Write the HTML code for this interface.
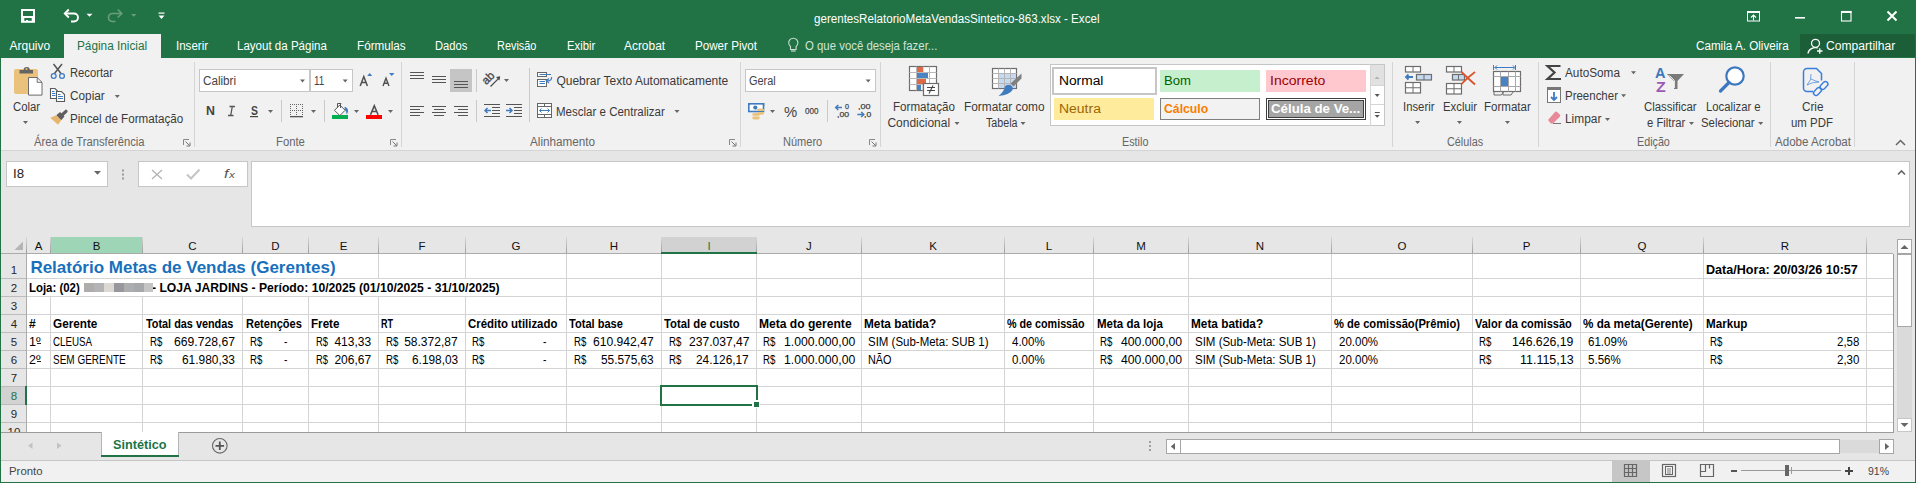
<!DOCTYPE html>
<html><head><meta charset="utf-8"><style>
html,body{margin:0;padding:0;}
body{width:1916px;height:483px;overflow:hidden;position:relative;font-family:"Liberation Sans",sans-serif;}
body>div,body>svg{position:absolute;}
</style></head><body>
<div style="left:0px;top:0px;width:1916px;height:483px;background:#217346;"></div>
<div style="left:1px;top:58px;width:1914px;height:92px;background:#f1f1f1;"></div>
<div style="left:1px;top:150px;width:1914px;height:1px;background:#d4d4d4;"></div>
<div style="left:1px;top:151px;width:1914px;height:76px;background:#e6e6e6;"></div>
<div style="left:1px;top:227px;width:1914px;height:27px;background:#e6e6e6;"></div>
<div style="left:27px;top:254px;width:1866px;height:178px;background:#ffffff;"></div>
<div style="left:1px;top:254px;width:26px;height:178px;background:#e6e6e6;"></div>
<div style="left:1893px;top:254px;width:22px;height:178px;background:#e6e6e6;"></div>
<div style="left:813.50px;top:13.04px;font-size:12px;line-height:12px;color:#ffffff;white-space:pre;transform:scaleX(0.9661);transform-origin:0 0;">gerentesRelatorioMetaVendasSintetico-863.xlsx - Excel</div>
<div style="left:64px;top:34px;width:97px;height:25px;background:#f1f1f1;"></div>
<div style="left:9.50px;top:40.34px;font-size:12px;line-height:12px;color:#ffffff;white-space:pre;">Arquivo</div>
<div style="left:176.00px;top:40.34px;font-size:12px;line-height:12px;color:#ffffff;white-space:pre;transform:scaleX(0.9606);transform-origin:0 0;">Inserir</div>
<div style="left:237.40px;top:40.34px;font-size:12px;line-height:12px;color:#ffffff;white-space:pre;transform:scaleX(0.9617);transform-origin:0 0;">Layout da Página</div>
<div style="left:357.30px;top:40.34px;font-size:12px;line-height:12px;color:#ffffff;white-space:pre;transform:scaleX(0.9740);transform-origin:0 0;">Fórmulas</div>
<div style="left:435.40px;top:40.34px;font-size:12px;line-height:12px;color:#ffffff;white-space:pre;transform:scaleX(0.9314);transform-origin:0 0;">Dados</div>
<div style="left:497.00px;top:40.34px;font-size:12px;line-height:12px;color:#ffffff;white-space:pre;transform:scaleX(0.9091);transform-origin:0 0;">Revisão</div>
<div style="left:566.50px;top:40.34px;font-size:12px;line-height:12px;color:#ffffff;white-space:pre;transform:scaleX(0.9400);transform-origin:0 0;">Exibir</div>
<div style="left:624.00px;top:40.34px;font-size:12px;line-height:12px;color:#ffffff;white-space:pre;transform:scaleX(0.9929);transform-origin:0 0;">Acrobat</div>
<div style="left:695.00px;top:40.34px;font-size:12px;line-height:12px;color:#ffffff;white-space:pre;transform:scaleX(0.9692);transform-origin:0 0;">Power Pivot</div>
<div style="left:77.00px;top:40.34px;font-size:12px;line-height:12px;color:#217346;white-space:pre;transform:scaleX(0.9831);transform-origin:0 0;">Página Inicial</div>
<div style="left:804.50px;top:40.34px;font-size:12px;line-height:12px;color:#cfe3d6;white-space:pre;transform:scaleX(0.9489);transform-origin:0 0;">O que você deseja fazer...</div>
<div style="left:1696.40px;top:40.34px;font-size:12px;line-height:12px;color:#ffffff;white-space:pre;transform:scaleX(0.9719);transform-origin:0 0;">Camila A. Oliveira</div>
<div style="left:1800px;top:34px;width:115px;height:23px;background:#1b5e38;"></div>
<div style="left:1826.40px;top:40.34px;font-size:12px;line-height:12px;color:#ffffff;white-space:pre;transform:scaleX(1.0087);transform-origin:0 0;">Compartilhar</div>
<div style="left:194px;top:62px;width:1px;height:85px;background:#d5d5d5;"></div>
<div style="left:401px;top:62px;width:1px;height:85px;background:#d5d5d5;"></div>
<div style="left:740px;top:62px;width:1px;height:85px;background:#d5d5d5;"></div>
<div style="left:880px;top:62px;width:1px;height:85px;background:#d5d5d5;"></div>
<div style="left:1392px;top:62px;width:1px;height:85px;background:#d5d5d5;"></div>
<div style="left:1538px;top:62px;width:1px;height:85px;background:#d5d5d5;"></div>
<div style="left:1770px;top:62px;width:1px;height:85px;background:#d5d5d5;"></div>
<div style="left:1854px;top:62px;width:1px;height:85px;background:#d5d5d5;"></div>
<div style="left:69.60px;top:66.84px;font-size:12px;line-height:12px;color:#3a3a3a;white-space:pre;transform:scaleX(0.9348);transform-origin:0 0;">Recortar</div>
<div style="left:69.60px;top:89.84px;font-size:12px;line-height:12px;color:#3a3a3a;white-space:pre;transform:scaleX(0.9829);transform-origin:0 0;">Copiar</div>
<div style="left:69.60px;top:112.64px;font-size:12px;line-height:12px;color:#3a3a3a;white-space:pre;transform:scaleX(0.9692);transform-origin:0 0;">Pincel de Formatação</div>
<div style="left:12.50px;top:101.34px;font-size:12px;line-height:12px;color:#3a3a3a;white-space:pre;transform:scaleX(0.9448);transform-origin:0 0;">Colar</div>
<div style="left:34.00px;top:136.34px;font-size:12px;line-height:12px;color:#666666;white-space:pre;transform:scaleX(0.9364);transform-origin:0 0;">Área de Transferência</div>
<div style="left:275.70px;top:136.34px;font-size:12px;line-height:12px;color:#666666;white-space:pre;transform:scaleX(0.9419);transform-origin:0 0;">Fonte</div>
<div style="left:556.40px;top:74.64px;font-size:12px;line-height:12px;color:#3a3a3a;white-space:pre;">Quebrar Texto Automaticamente</div>
<div style="left:556.40px;top:106.14px;font-size:12px;line-height:12px;color:#3a3a3a;white-space:pre;transform:scaleX(0.9602);transform-origin:0 0;">Mesclar e Centralizar</div>
<div style="left:530.00px;top:136.34px;font-size:12px;line-height:12px;color:#666666;white-space:pre;transform:scaleX(0.9746);transform-origin:0 0;">Alinhamento</div>
<div style="left:782.70px;top:136.34px;font-size:12px;line-height:12px;color:#666666;white-space:pre;transform:scaleX(0.9186);transform-origin:0 0;">Número</div>
<div style="left:892.70px;top:100.84px;font-size:12px;line-height:12px;color:#3a3a3a;white-space:pre;transform:scaleX(0.9672);transform-origin:0 0;">Formatação</div>
<div style="left:887.40px;top:116.84px;font-size:12px;line-height:12px;color:#3a3a3a;white-space:pre;">Condicional</div>
<div style="left:964.30px;top:100.84px;font-size:12px;line-height:12px;color:#3a3a3a;white-space:pre;transform:scaleX(0.9902);transform-origin:0 0;">Formatar como</div>
<div style="left:985.70px;top:116.84px;font-size:12px;line-height:12px;color:#3a3a3a;white-space:pre;transform:scaleX(0.8917);transform-origin:0 0;">Tabela</div>
<div style="left:1122.40px;top:136.34px;font-size:12px;line-height:12px;color:#666666;white-space:pre;transform:scaleX(0.9000);transform-origin:0 0;">Estilo</div>
<div style="left:1402.60px;top:100.84px;font-size:12px;line-height:12px;color:#3a3a3a;white-space:pre;transform:scaleX(0.9424);transform-origin:0 0;">Inserir</div>
<div style="left:1442.60px;top:100.84px;font-size:12px;line-height:12px;color:#3a3a3a;white-space:pre;transform:scaleX(0.9444);transform-origin:0 0;">Excluir</div>
<div style="left:1483.50px;top:100.84px;font-size:12px;line-height:12px;color:#3a3a3a;white-space:pre;transform:scaleX(0.9612);transform-origin:0 0;">Formatar</div>
<div style="left:1447.40px;top:136.34px;font-size:12px;line-height:12px;color:#666666;white-space:pre;transform:scaleX(0.9025);transform-origin:0 0;">Células</div>
<div style="left:1565.30px;top:66.84px;font-size:12px;line-height:12px;color:#3a3a3a;white-space:pre;transform:scaleX(0.9804);transform-origin:0 0;">AutoSoma</div>
<div style="left:1565.30px;top:89.84px;font-size:12px;line-height:12px;color:#3a3a3a;white-space:pre;transform:scaleX(0.9564);transform-origin:0 0;">Preencher</div>
<div style="left:1565.30px;top:112.84px;font-size:12px;line-height:12px;color:#3a3a3a;white-space:pre;transform:scaleX(0.9919);transform-origin:0 0;">Limpar</div>
<div style="left:1643.60px;top:100.84px;font-size:12px;line-height:12px;color:#3a3a3a;white-space:pre;transform:scaleX(0.9491);transform-origin:0 0;">Classificar</div>
<div style="left:1646.50px;top:116.84px;font-size:12px;line-height:12px;color:#3a3a3a;white-space:pre;transform:scaleX(0.9390);transform-origin:0 0;">e Filtrar</div>
<div style="left:1705.70px;top:100.84px;font-size:12px;line-height:12px;color:#3a3a3a;white-space:pre;transform:scaleX(0.9414);transform-origin:0 0;">Localizar e</div>
<div style="left:1700.90px;top:116.84px;font-size:12px;line-height:12px;color:#3a3a3a;white-space:pre;transform:scaleX(0.9456);transform-origin:0 0;">Selecionar</div>
<div style="left:1637.40px;top:136.34px;font-size:12px;line-height:12px;color:#666666;white-space:pre;transform:scaleX(0.8946);transform-origin:0 0;">Edição</div>
<div style="left:1802.00px;top:100.84px;font-size:12px;line-height:12px;color:#3a3a3a;white-space:pre;transform:scaleX(0.9773);transform-origin:0 0;">Crie</div>
<div style="left:1791.40px;top:116.84px;font-size:12px;line-height:12px;color:#3a3a3a;white-space:pre;transform:scaleX(0.9523);transform-origin:0 0;">um PDF</div>
<div style="left:1774.50px;top:136.34px;font-size:12px;line-height:12px;color:#666666;white-space:pre;transform:scaleX(0.9658);transform-origin:0 0;">Adobe Acrobat</div>
<div style="left:199px;top:69px;width:109px;height:21px;border:1px solid #c6c6c6;background:#ffffff;"></div>
<div style="left:310px;top:69px;width:41px;height:21px;border:1px solid #c6c6c6;background:#ffffff;"></div>
<div style="left:202.70px;top:74.84px;font-size:12px;line-height:12px;color:#444;white-space:pre;transform:scaleX(0.9735);transform-origin:0 0;">Calibri</div>
<div style="left:313.60px;top:74.84px;font-size:12px;line-height:12px;color:#444;white-space:pre;transform:scaleX(0.8231);transform-origin:0 0;">11</div>
<div style="left:205.70px;top:105.42px;font-size:12.5px;line-height:12.5px;color:#444;white-space:pre;font-weight:bold;transform:scaleX(0.9889);transform-origin:0 0;">N</div>
<div style="left:250.50px;top:105.42px;font-size:12.5px;line-height:12.5px;color:#444;white-space:pre;transform:scaleX(0.8333);transform-origin:0 0;font-weight:bold;">S</div>
<div style="left:281px;top:100px;width:1px;height:22px;background:#c8c8c8;"></div>
<div style="left:324px;top:100px;width:1px;height:22px;background:#c8c8c8;"></div>
<div style="left:332px;top:115px;width:16px;height:4px;background:#00b050;"></div>
<div style="left:366px;top:115px;width:16px;height:4px;background:#ff0000;"></div>
<div style="left:450px;top:69px;width:22px;height:23px;background:#c5c5c5;"></div>
<div style="left:476px;top:69px;width:1px;height:23px;background:#c8c8c8;"></div>
<div style="left:476px;top:100px;width:1px;height:22px;background:#c8c8c8;"></div>
<div style="left:529px;top:68px;width:1px;height:54px;background:#c8c8c8;"></div>
<div style="left:745px;top:69px;width:129px;height:21px;border:1px solid #c6c6c6;background:#ffffff;"></div>
<div style="left:748.60px;top:74.84px;font-size:12px;line-height:12px;color:#444;white-space:pre;transform:scaleX(0.9103);transform-origin:0 0;">Geral</div>
<div style="left:784.30px;top:105.15px;font-size:14px;line-height:14px;color:#444;white-space:pre;transform:scaleX(1.0583);transform-origin:0 0;">%</div>
<div style="left:804.60px;top:106.26px;font-size:9.5px;line-height:9.5px;color:#444;white-space:pre;transform:scaleX(0.8471);transform-origin:0 0;-webkit-text-stroke:0.25px #444;">000</div>
<div style="left:827px;top:100px;width:1px;height:22px;background:#c8c8c8;"></div>
<div style="left:845.00px;top:103.03px;font-size:8px;line-height:8px;color:#444;white-space:pre;transform:scaleX(0.9000);transform-origin:0 0;-webkit-text-stroke:0.25px #444;">0</div>
<div style="left:836.80px;top:111.23px;font-size:8px;line-height:8px;color:#444;white-space:pre;transform:scaleX(1.0833);transform-origin:0 0;-webkit-text-stroke:0.25px #444;">,00</div>
<div style="left:858.00px;top:103.03px;font-size:8px;line-height:8px;color:#444;white-space:pre;transform:scaleX(1.1250);transform-origin:0 0;-webkit-text-stroke:0.25px #444;">,00</div>
<div style="left:864.00px;top:111.23px;font-size:8px;line-height:8px;color:#444;white-space:pre;transform:scaleX(1.0714);transform-origin:0 0;-webkit-text-stroke:0.25px #444;">,0</div>
<div style="left:1050px;top:64px;width:333px;height:60px;border:1px solid #c6c6c6;background:#ffffff;"></div>
<div style="left:1052px;top:67px;width:105px;height:28px;background:#c6c6c6;"></div>
<div style="left:1054px;top:69px;width:101px;height:24px;background:#ffffff;"></div>
<div style="left:1058.50px;top:74.84px;font-size:12px;line-height:12px;color:#000000;white-space:pre;transform:scaleX(1.1487);transform-origin:0 0;">Normal</div>
<div style="left:1160px;top:70px;width:100px;height:22px;background:#c6efce;"></div>
<div style="left:1164.20px;top:74.84px;font-size:12px;line-height:12px;color:#006100;white-space:pre;transform:scaleX(1.0920);transform-origin:0 0;">Bom</div>
<div style="left:1266px;top:70px;width:100px;height:22px;background:#ffc7ce;"></div>
<div style="left:1270.20px;top:74.84px;font-size:12px;line-height:12px;color:#9c0006;white-space:pre;transform:scaleX(1.1687);transform-origin:0 0;">Incorreto</div>
<div style="left:1054px;top:98px;width:100px;height:22px;background:#ffeb9c;"></div>
<div style="left:1058.50px;top:103.34px;font-size:12px;line-height:12px;color:#9c6500;white-space:pre;transform:scaleX(1.1639);transform-origin:0 0;">Neutra</div>
<div style="left:1160px;top:98px;width:98px;height:20px;border:1px solid #7f7f7f;background:#f2f2f2;"></div>
<div style="left:1164.20px;top:103.34px;font-size:12px;line-height:12px;color:#fa7d00;white-space:pre;font-weight:bold;transform:scaleX(1.0186);transform-origin:0 0;">Cálculo</div>
<div style="left:1266px;top:98px;width:100px;height:22px;background:#3f3f3f;"></div>
<div style="left:1267px;top:99px;width:98px;height:20px;background:#ffffff;"></div>
<div style="left:1268px;top:100px;width:96px;height:18px;background:#3f3f3f;"></div>
<div style="left:1269px;top:101px;width:94px;height:16px;background:#a5a5a5;"></div>
<div style="left:1270.50px;top:103.34px;font-size:12px;line-height:12px;color:#ffffff;white-space:pre;font-weight:bold;transform:scaleX(1.1049);transform-origin:0 0;">Célula de Ve...</div>
<div style="left:1370px;top:64px;width:1px;height:62px;background:#d5d5d5;"></div>
<div style="left:1371px;top:65px;width:13px;height:21px;background:#e1e1e1;"></div>
<div style="left:1371px;top:85px;width:13px;height:1px;background:#d5d5d5;"></div>
<div style="left:1371px;top:104px;width:13px;height:1px;background:#d5d5d5;"></div>
<div style="left:1655.00px;top:66.43px;font-size:14.5px;line-height:14.5px;color:#3d78bf;white-space:pre;font-weight:bold;">A</div>
<div style="left:1655.70px;top:80.43px;font-size:14.5px;line-height:14.5px;color:#9b59b6;white-space:pre;font-weight:bold;transform:scaleX(1.1000);transform-origin:0 0;">Z</div>
<div style="left:6px;top:161px;width:100px;height:24px;border:1px solid #c6c6c6;background:#ffffff;"></div>
<div style="left:13.00px;top:167.84px;font-size:12px;line-height:12px;color:#222;white-space:pre;transform:scaleX(1.1000);transform-origin:0 0;">I8</div>
<div style="left:138px;top:161px;width:108px;height:24px;border:1px solid #c6c6c6;background:#ffffff;"></div>
<div style="left:224.00px;top:166.50px;font-size:13px;line-height:13px;color:#555;white-space:pre;transform:scaleX(1.2500);transform-origin:0 0;font-style:italic;font-family:"Liberation Serif",serif;font-weight:bold;">f</div>
<div style="left:228.50px;top:171.38px;font-size:9px;line-height:9px;color:#555;white-space:pre;transform:scaleX(1.3000);transform-origin:0 0;font-style:italic;font-family:"Liberation Serif",serif;font-weight:bold;">x</div>
<div style="left:251px;top:161px;width:1657px;height:64px;border:1px solid #c6c6c6;background:#ffffff;"></div>
<div style="left:26px;top:237px;width:1px;height:16px;background:linear-gradient(#d6d6d6,#9e9e9e);"></div>
<div style="left:50px;top:237px;width:1px;height:16px;background:linear-gradient(#d6d6d6,#9e9e9e);"></div>
<div style="left:142px;top:237px;width:1px;height:16px;background:linear-gradient(#d6d6d6,#9e9e9e);"></div>
<div style="left:242px;top:237px;width:1px;height:16px;background:linear-gradient(#d6d6d6,#9e9e9e);"></div>
<div style="left:308px;top:237px;width:1px;height:16px;background:linear-gradient(#d6d6d6,#9e9e9e);"></div>
<div style="left:378px;top:237px;width:1px;height:16px;background:linear-gradient(#d6d6d6,#9e9e9e);"></div>
<div style="left:465px;top:237px;width:1px;height:16px;background:linear-gradient(#d6d6d6,#9e9e9e);"></div>
<div style="left:566px;top:237px;width:1px;height:16px;background:linear-gradient(#d6d6d6,#9e9e9e);"></div>
<div style="left:661px;top:237px;width:1px;height:16px;background:linear-gradient(#d6d6d6,#9e9e9e);"></div>
<div style="left:756px;top:237px;width:1px;height:16px;background:linear-gradient(#d6d6d6,#9e9e9e);"></div>
<div style="left:861px;top:237px;width:1px;height:16px;background:linear-gradient(#d6d6d6,#9e9e9e);"></div>
<div style="left:1004px;top:237px;width:1px;height:16px;background:linear-gradient(#d6d6d6,#9e9e9e);"></div>
<div style="left:1093px;top:237px;width:1px;height:16px;background:linear-gradient(#d6d6d6,#9e9e9e);"></div>
<div style="left:1188px;top:237px;width:1px;height:16px;background:linear-gradient(#d6d6d6,#9e9e9e);"></div>
<div style="left:1331px;top:237px;width:1px;height:16px;background:linear-gradient(#d6d6d6,#9e9e9e);"></div>
<div style="left:1472px;top:237px;width:1px;height:16px;background:linear-gradient(#d6d6d6,#9e9e9e);"></div>
<div style="left:1580px;top:237px;width:1px;height:16px;background:linear-gradient(#d6d6d6,#9e9e9e);"></div>
<div style="left:1703px;top:237px;width:1px;height:16px;background:linear-gradient(#d6d6d6,#9e9e9e);"></div>
<div style="left:1866px;top:237px;width:1px;height:16px;background:linear-gradient(#d6d6d6,#9e9e9e);"></div>
<div style="left:51px;top:237px;width:91px;height:16px;background:#9fd5b7;"></div>
<div style="left:662px;top:237px;width:94px;height:15px;background:#d2d2d2;"></div>
<div style="left:1px;top:253px;width:1892px;height:1px;background:#ababab;"></div>
<div style="left:661px;top:252px;width:96px;height:2px;background:#217346;"></div>
<div style="left:26px;top:254px;width:1px;height:178px;background:#ababab;"></div>
<div style="left:34.66px;top:241.27px;font-size:11.5px;line-height:11.5px;color:#111111;white-space:pre;">A</div>
<div style="left:92.66px;top:241.27px;font-size:11.5px;line-height:11.5px;color:#111111;white-space:pre;">B</div>
<div style="left:188.34px;top:241.27px;font-size:11.5px;line-height:11.5px;color:#111111;white-space:pre;">C</div>
<div style="left:271.34px;top:241.27px;font-size:11.5px;line-height:11.5px;color:#111111;white-space:pre;">D</div>
<div style="left:339.66px;top:241.27px;font-size:11.5px;line-height:11.5px;color:#111111;white-space:pre;">E</div>
<div style="left:418.48px;top:241.27px;font-size:11.5px;line-height:11.5px;color:#111111;white-space:pre;">F</div>
<div style="left:511.53px;top:241.27px;font-size:11.5px;line-height:11.5px;color:#111111;white-space:pre;">G</div>
<div style="left:609.84px;top:241.27px;font-size:11.5px;line-height:11.5px;color:#111111;white-space:pre;">H</div>
<div style="left:707.41px;top:241.27px;font-size:11.5px;line-height:11.5px;color:#217346;white-space:pre;">I</div>
<div style="left:806.12px;top:241.27px;font-size:11.5px;line-height:11.5px;color:#111111;white-space:pre;">J</div>
<div style="left:929.16px;top:241.27px;font-size:11.5px;line-height:11.5px;color:#111111;white-space:pre;">K</div>
<div style="left:1045.80px;top:241.27px;font-size:11.5px;line-height:11.5px;color:#111111;white-space:pre;">L</div>
<div style="left:1136.21px;top:241.27px;font-size:11.5px;line-height:11.5px;color:#111111;white-space:pre;">M</div>
<div style="left:1255.84px;top:241.27px;font-size:11.5px;line-height:11.5px;color:#111111;white-space:pre;">N</div>
<div style="left:1397.53px;top:241.27px;font-size:11.5px;line-height:11.5px;color:#111111;white-space:pre;">O</div>
<div style="left:1522.66px;top:241.27px;font-size:11.5px;line-height:11.5px;color:#111111;white-space:pre;">P</div>
<div style="left:1637.53px;top:241.27px;font-size:11.5px;line-height:11.5px;color:#111111;white-space:pre;">Q</div>
<div style="left:1780.84px;top:241.27px;font-size:11.5px;line-height:11.5px;color:#111111;white-space:pre;">R</div>
<div style="left:1px;top:278px;width:25px;height:1px;background:#bcbcbc;"></div>
<div style="left:1px;top:296px;width:25px;height:1px;background:#bcbcbc;"></div>
<div style="left:1px;top:314px;width:25px;height:1px;background:#bcbcbc;"></div>
<div style="left:1px;top:332px;width:25px;height:1px;background:#bcbcbc;"></div>
<div style="left:1px;top:350px;width:25px;height:1px;background:#bcbcbc;"></div>
<div style="left:1px;top:368px;width:25px;height:1px;background:#bcbcbc;"></div>
<div style="left:1px;top:386px;width:25px;height:1px;background:#bcbcbc;"></div>
<div style="left:1px;top:404px;width:25px;height:1px;background:#bcbcbc;"></div>
<div style="left:1px;top:422px;width:25px;height:1px;background:#bcbcbc;"></div>
<div style="left:27px;top:278px;width:1866px;height:1px;background:#d4d4d4;"></div>
<div style="left:27px;top:296px;width:1866px;height:1px;background:#d4d4d4;"></div>
<div style="left:27px;top:314px;width:1866px;height:1px;background:#d4d4d4;"></div>
<div style="left:27px;top:332px;width:1866px;height:1px;background:#d4d4d4;"></div>
<div style="left:27px;top:350px;width:1866px;height:1px;background:#d4d4d4;"></div>
<div style="left:27px;top:368px;width:1866px;height:1px;background:#d4d4d4;"></div>
<div style="left:27px;top:386px;width:1866px;height:1px;background:#d4d4d4;"></div>
<div style="left:27px;top:404px;width:1866px;height:1px;background:#d4d4d4;"></div>
<div style="left:27px;top:422px;width:1866px;height:1px;background:#d4d4d4;"></div>
<div style="left:50px;top:296px;width:1px;height:136px;background:#d4d4d4;"></div>
<div style="left:142px;top:296px;width:1px;height:136px;background:#d4d4d4;"></div>
<div style="left:242px;top:296px;width:1px;height:136px;background:#d4d4d4;"></div>
<div style="left:308px;top:296px;width:1px;height:136px;background:#d4d4d4;"></div>
<div style="left:378px;top:254px;width:1px;height:24px;background:#d4d4d4;"></div>
<div style="left:378px;top:296px;width:1px;height:136px;background:#d4d4d4;"></div>
<div style="left:465px;top:254px;width:1px;height:24px;background:#d4d4d4;"></div>
<div style="left:465px;top:296px;width:1px;height:136px;background:#d4d4d4;"></div>
<div style="left:566px;top:254px;width:1px;height:178px;background:#d4d4d4;"></div>
<div style="left:661px;top:254px;width:1px;height:178px;background:#d4d4d4;"></div>
<div style="left:756px;top:254px;width:1px;height:178px;background:#d4d4d4;"></div>
<div style="left:861px;top:254px;width:1px;height:178px;background:#d4d4d4;"></div>
<div style="left:1004px;top:254px;width:1px;height:178px;background:#d4d4d4;"></div>
<div style="left:1093px;top:254px;width:1px;height:178px;background:#d4d4d4;"></div>
<div style="left:1188px;top:254px;width:1px;height:178px;background:#d4d4d4;"></div>
<div style="left:1331px;top:254px;width:1px;height:178px;background:#d4d4d4;"></div>
<div style="left:1472px;top:254px;width:1px;height:178px;background:#d4d4d4;"></div>
<div style="left:1580px;top:254px;width:1px;height:178px;background:#d4d4d4;"></div>
<div style="left:1703px;top:254px;width:1px;height:178px;background:#d4d4d4;"></div>
<div style="left:1866px;top:254px;width:1px;height:178px;background:#d4d4d4;"></div>
<div style="left:1893px;top:254px;width:1px;height:178px;background:#9b9b9b;"></div>
<div style="left:1px;top:387px;width:24px;height:17px;background:#d2d2d2;"></div>
<div style="left:25px;top:386px;width:2px;height:19px;background:#217346;"></div>
<div style="left:10.80px;top:264.67px;font-size:11.5px;line-height:11.5px;color:#262626;white-space:pre;">1</div>
<div style="left:10.80px;top:282.67px;font-size:11.5px;line-height:11.5px;color:#262626;white-space:pre;">2</div>
<div style="left:10.80px;top:300.67px;font-size:11.5px;line-height:11.5px;color:#262626;white-space:pre;">3</div>
<div style="left:10.80px;top:318.67px;font-size:11.5px;line-height:11.5px;color:#262626;white-space:pre;">4</div>
<div style="left:10.80px;top:336.67px;font-size:11.5px;line-height:11.5px;color:#262626;white-space:pre;">5</div>
<div style="left:10.80px;top:354.67px;font-size:11.5px;line-height:11.5px;color:#262626;white-space:pre;">6</div>
<div style="left:10.80px;top:372.67px;font-size:11.5px;line-height:11.5px;color:#262626;white-space:pre;">7</div>
<div style="left:10.80px;top:390.67px;font-size:11.5px;line-height:11.5px;color:#217346;white-space:pre;">8</div>
<div style="left:10.80px;top:408.67px;font-size:11.5px;line-height:11.5px;color:#262626;white-space:pre;">9</div>
<div style="left:7.61px;top:426.77px;font-size:11.5px;line-height:11.5px;color:#262626;white-space:pre;">10</div>
<div style="left:30.40px;top:258.81px;font-size:17px;line-height:17px;color:#1870bc;white-space:pre;font-weight:bold;">Relatório Metas de Vendas (Gerentes)</div>
<div style="left:29.10px;top:281.54px;font-size:12px;line-height:12px;color:#000000;white-space:pre;font-weight:bold;transform:scaleX(0.9509);transform-origin:0 0;">Loja: (02)</div>
<div style="left:151.50px;top:281.54px;font-size:12px;line-height:12px;color:#000000;white-space:pre;font-weight:bold;transform:scaleX(1.0131);transform-origin:0 0;">- LOJA JARDINS - Período: 10/2025 (01/10/2025 - 31/10/2025)</div>
<div style="left:84px;top:283px;width:10px;height:9px;background:#aeadac;"></div>
<div style="left:94px;top:283px;width:10px;height:9px;background:#b4b4b6;"></div>
<div style="left:104px;top:283px;width:10px;height:9px;background:#dcd9d4;"></div>
<div style="left:114px;top:283px;width:10px;height:9px;background:#98979c;"></div>
<div style="left:124px;top:283px;width:10px;height:9px;background:#acadaf;"></div>
<div style="left:134px;top:283px;width:10px;height:9px;background:#a7a8aa;"></div>
<div style="left:144px;top:283px;width:9px;height:9px;background:#c5c5c5;"></div>
<div style="left:1706.20px;top:263.54px;font-size:12px;line-height:12px;color:#000000;white-space:pre;font-weight:bold;transform:scaleX(1.0490);transform-origin:0 0;">Data/Hora: 20/03/26 10:57</div>
<div style="left:28.90px;top:317.54px;font-size:12px;line-height:12px;color:#000000;white-space:pre;font-weight:bold;">#</div>
<div style="left:53.30px;top:317.54px;font-size:12px;line-height:12px;color:#000000;white-space:pre;font-weight:bold;transform:scaleX(0.9783);transform-origin:0 0;">Gerente</div>
<div style="left:146.00px;top:317.54px;font-size:12px;line-height:12px;color:#000000;white-space:pre;font-weight:bold;transform:scaleX(0.9052);transform-origin:0 0;">Total das vendas</div>
<div style="left:245.50px;top:317.54px;font-size:12px;line-height:12px;color:#000000;white-space:pre;font-weight:bold;transform:scaleX(0.9197);transform-origin:0 0;">Retenções</div>
<div style="left:311.20px;top:317.54px;font-size:12px;line-height:12px;color:#000000;white-space:pre;font-weight:bold;transform:scaleX(0.9700);transform-origin:0 0;">Frete</div>
<div style="left:381.20px;top:317.54px;font-size:12px;line-height:12px;color:#000000;white-space:pre;font-weight:bold;transform:scaleX(0.7529);transform-origin:0 0;">RT</div>
<div style="left:468.30px;top:317.54px;font-size:12px;line-height:12px;color:#000000;white-space:pre;font-weight:bold;transform:scaleX(0.9511);transform-origin:0 0;">Crédito utilizado</div>
<div style="left:569.00px;top:317.54px;font-size:12px;line-height:12px;color:#000000;white-space:pre;font-weight:bold;transform:scaleX(0.9220);transform-origin:0 0;">Total base</div>
<div style="left:664.10px;top:317.54px;font-size:12px;line-height:12px;color:#000000;white-space:pre;font-weight:bold;transform:scaleX(0.9412);transform-origin:0 0;">Total de custo</div>
<div style="left:759.20px;top:317.54px;font-size:12px;line-height:12px;color:#000000;white-space:pre;font-weight:bold;transform:scaleX(1.0065);transform-origin:0 0;">Meta do gerente</div>
<div style="left:864.40px;top:317.54px;font-size:12px;line-height:12px;color:#000000;white-space:pre;font-weight:bold;transform:scaleX(0.9836);transform-origin:0 0;">Meta batida?</div>
<div style="left:1006.90px;top:317.54px;font-size:12px;line-height:12px;color:#000000;white-space:pre;font-weight:bold;transform:scaleX(0.8954);transform-origin:0 0;">% de comissão</div>
<div style="left:1096.50px;top:317.54px;font-size:12px;line-height:12px;color:#000000;white-space:pre;font-weight:bold;transform:scaleX(0.9594);transform-origin:0 0;">Meta da loja</div>
<div style="left:1191.20px;top:317.54px;font-size:12px;line-height:12px;color:#000000;white-space:pre;font-weight:bold;transform:scaleX(0.9836);transform-origin:0 0;">Meta batida?</div>
<div style="left:1333.80px;top:317.54px;font-size:12px;line-height:12px;color:#000000;white-space:pre;font-weight:bold;transform:scaleX(0.9304);transform-origin:0 0;">% de comissão(Prêmio)</div>
<div style="left:1475.30px;top:317.54px;font-size:12px;line-height:12px;color:#000000;white-space:pre;font-weight:bold;transform:scaleX(0.9181);transform-origin:0 0;">Valor da comissão</div>
<div style="left:1583.40px;top:317.54px;font-size:12px;line-height:12px;color:#000000;white-space:pre;font-weight:bold;transform:scaleX(0.9735);transform-origin:0 0;">% da meta(Gerente)</div>
<div style="left:1706.20px;top:317.54px;font-size:12px;line-height:12px;color:#000000;white-space:pre;font-weight:bold;transform:scaleX(0.9698);transform-origin:0 0;">Markup</div>
<div style="left:28.90px;top:335.54px;font-size:12px;line-height:12px;color:#000000;white-space:pre;transform:scaleX(1.0417);transform-origin:0 0;">1º</div>
<div style="left:53.30px;top:335.54px;font-size:12px;line-height:12px;color:#000000;white-space:pre;transform:scaleX(0.8146);transform-origin:0 0;">CLEUSA</div>
<div style="left:149.50px;top:335.54px;font-size:12px;line-height:12px;color:#000000;white-space:pre;transform:scaleX(0.8063);transform-origin:0 0;">R$</div>
<div style="left:174.30px;top:335.54px;font-size:12px;line-height:12px;color:#000000;white-space:pre;transform:scaleX(1.0150);transform-origin:0 0;">669.728,67</div>
<div style="left:249.50px;top:335.54px;font-size:12px;line-height:12px;color:#000000;white-space:pre;transform:scaleX(0.8062);transform-origin:0 0;">R$</div>
<div style="left:284.40px;top:335.54px;font-size:12px;line-height:12px;color:#000000;white-space:pre;transform:scaleX(0.8500);transform-origin:0 0;">-</div>
<div style="left:315.50px;top:335.54px;font-size:12px;line-height:12px;color:#000000;white-space:pre;transform:scaleX(0.7812);transform-origin:0 0;">R$</div>
<div style="left:334.40px;top:335.54px;font-size:12px;line-height:12px;color:#000000;white-space:pre;">413,33</div>
<div style="left:385.70px;top:335.54px;font-size:12px;line-height:12px;color:#000000;white-space:pre;transform:scaleX(0.8063);transform-origin:0 0;">R$</div>
<div style="left:404.20px;top:335.54px;font-size:12px;line-height:12px;color:#000000;white-space:pre;">58.372,87</div>
<div style="left:472.40px;top:335.54px;font-size:12px;line-height:12px;color:#000000;white-space:pre;transform:scaleX(0.8063);transform-origin:0 0;">R$</div>
<div style="left:542.60px;top:335.54px;font-size:12px;line-height:12px;color:#000000;white-space:pre;transform:scaleX(0.8500);transform-origin:0 0;">-</div>
<div style="left:573.50px;top:335.54px;font-size:12px;line-height:12px;color:#000000;white-space:pre;transform:scaleX(0.8062);transform-origin:0 0;">R$</div>
<div style="left:593.30px;top:335.54px;font-size:12px;line-height:12px;color:#000000;white-space:pre;transform:scaleX(1.0100);transform-origin:0 0;">610.942,47</div>
<div style="left:668.60px;top:335.54px;font-size:12px;line-height:12px;color:#000000;white-space:pre;transform:scaleX(0.8062);transform-origin:0 0;">R$</div>
<div style="left:688.50px;top:335.54px;font-size:12px;line-height:12px;color:#000000;white-space:pre;transform:scaleX(1.0083);transform-origin:0 0;">237.037,47</div>
<div style="left:763.20px;top:335.54px;font-size:12px;line-height:12px;color:#000000;white-space:pre;transform:scaleX(0.8062);transform-origin:0 0;">R$</div>
<div style="left:783.60px;top:335.54px;font-size:12px;line-height:12px;color:#000000;white-space:pre;transform:scaleX(1.0171);transform-origin:0 0;">1.000.000,00</div>
<div style="left:868.00px;top:335.54px;font-size:12px;line-height:12px;color:#000000;white-space:pre;transform:scaleX(0.9563);transform-origin:0 0;">SIM (Sub-Meta: SUB 1)</div>
<div style="left:1011.50px;top:335.54px;font-size:12px;line-height:12px;color:#000000;white-space:pre;transform:scaleX(0.9588);transform-origin:0 0;">4.00%</div>
<div style="left:1100.20px;top:335.54px;font-size:12px;line-height:12px;color:#000000;white-space:pre;transform:scaleX(0.8062);transform-origin:0 0;">R$</div>
<div style="left:1120.50px;top:335.54px;font-size:12px;line-height:12px;color:#000000;white-space:pre;transform:scaleX(1.0183);transform-origin:0 0;">400.000,00</div>
<div style="left:1194.80px;top:335.54px;font-size:12px;line-height:12px;color:#000000;white-space:pre;transform:scaleX(0.9579);transform-origin:0 0;">SIM (Sub-Meta: SUB 1)</div>
<div style="left:1338.70px;top:335.54px;font-size:12px;line-height:12px;color:#000000;white-space:pre;transform:scaleX(0.9585);transform-origin:0 0;">20.00%</div>
<div style="left:1479.20px;top:335.54px;font-size:12px;line-height:12px;color:#000000;white-space:pre;transform:scaleX(0.8062);transform-origin:0 0;">R$</div>
<div style="left:1512.40px;top:335.54px;font-size:12px;line-height:12px;color:#000000;white-space:pre;transform:scaleX(1.0217);transform-origin:0 0;">146.626,19</div>
<div style="left:1587.50px;top:335.54px;font-size:12px;line-height:12px;color:#000000;white-space:pre;transform:scaleX(0.9634);transform-origin:0 0;">61.09%</div>
<div style="left:1710.30px;top:335.54px;font-size:12px;line-height:12px;color:#000000;white-space:pre;transform:scaleX(0.8063);transform-origin:0 0;">R$</div>
<div style="left:1836.50px;top:335.54px;font-size:12px;line-height:12px;color:#000000;white-space:pre;transform:scaleX(0.9583);transform-origin:0 0;">2,58</div>
<div style="left:28.90px;top:353.54px;font-size:12px;line-height:12px;color:#000000;white-space:pre;transform:scaleX(1.0417);transform-origin:0 0;">2º</div>
<div style="left:53.30px;top:353.54px;font-size:12px;line-height:12px;color:#000000;white-space:pre;transform:scaleX(0.8322);transform-origin:0 0;">SEM GERENTE</div>
<div style="left:149.50px;top:353.54px;font-size:12px;line-height:12px;color:#000000;white-space:pre;transform:scaleX(0.8063);transform-origin:0 0;">R$</div>
<div style="left:181.60px;top:353.54px;font-size:12px;line-height:12px;color:#000000;white-space:pre;transform:scaleX(0.9926);transform-origin:0 0;">61.980,33</div>
<div style="left:249.50px;top:353.54px;font-size:12px;line-height:12px;color:#000000;white-space:pre;transform:scaleX(0.8062);transform-origin:0 0;">R$</div>
<div style="left:284.40px;top:353.54px;font-size:12px;line-height:12px;color:#000000;white-space:pre;transform:scaleX(0.8500);transform-origin:0 0;">-</div>
<div style="left:315.50px;top:353.54px;font-size:12px;line-height:12px;color:#000000;white-space:pre;transform:scaleX(0.7812);transform-origin:0 0;">R$</div>
<div style="left:334.40px;top:353.54px;font-size:12px;line-height:12px;color:#000000;white-space:pre;">206,67</div>
<div style="left:385.70px;top:353.54px;font-size:12px;line-height:12px;color:#000000;white-space:pre;transform:scaleX(0.8063);transform-origin:0 0;">R$</div>
<div style="left:411.70px;top:353.54px;font-size:12px;line-height:12px;color:#000000;white-space:pre;transform:scaleX(0.9872);transform-origin:0 0;">6.198,03</div>
<div style="left:472.40px;top:353.54px;font-size:12px;line-height:12px;color:#000000;white-space:pre;transform:scaleX(0.8063);transform-origin:0 0;">R$</div>
<div style="left:542.60px;top:353.54px;font-size:12px;line-height:12px;color:#000000;white-space:pre;transform:scaleX(0.8500);transform-origin:0 0;">-</div>
<div style="left:573.50px;top:353.54px;font-size:12px;line-height:12px;color:#000000;white-space:pre;transform:scaleX(0.8062);transform-origin:0 0;">R$</div>
<div style="left:600.60px;top:353.54px;font-size:12px;line-height:12px;color:#000000;white-space:pre;transform:scaleX(0.9870);transform-origin:0 0;">55.575,63</div>
<div style="left:668.60px;top:353.54px;font-size:12px;line-height:12px;color:#000000;white-space:pre;transform:scaleX(0.8062);transform-origin:0 0;">R$</div>
<div style="left:695.70px;top:353.54px;font-size:12px;line-height:12px;color:#000000;white-space:pre;transform:scaleX(0.9870);transform-origin:0 0;">24.126,17</div>
<div style="left:763.20px;top:353.54px;font-size:12px;line-height:12px;color:#000000;white-space:pre;transform:scaleX(0.8062);transform-origin:0 0;">R$</div>
<div style="left:783.60px;top:353.54px;font-size:12px;line-height:12px;color:#000000;white-space:pre;transform:scaleX(1.0171);transform-origin:0 0;">1.000.000,00</div>
<div style="left:868.00px;top:353.54px;font-size:12px;line-height:12px;color:#000000;white-space:pre;transform:scaleX(0.9038);transform-origin:0 0;">NÃO</div>
<div style="left:1011.50px;top:353.54px;font-size:12px;line-height:12px;color:#000000;white-space:pre;transform:scaleX(0.9588);transform-origin:0 0;">0.00%</div>
<div style="left:1100.20px;top:353.54px;font-size:12px;line-height:12px;color:#000000;white-space:pre;transform:scaleX(0.8062);transform-origin:0 0;">R$</div>
<div style="left:1120.50px;top:353.54px;font-size:12px;line-height:12px;color:#000000;white-space:pre;transform:scaleX(1.0183);transform-origin:0 0;">400.000,00</div>
<div style="left:1194.80px;top:353.54px;font-size:12px;line-height:12px;color:#000000;white-space:pre;transform:scaleX(0.9579);transform-origin:0 0;">SIM (Sub-Meta: SUB 1)</div>
<div style="left:1338.70px;top:353.54px;font-size:12px;line-height:12px;color:#000000;white-space:pre;transform:scaleX(0.9585);transform-origin:0 0;">20.00%</div>
<div style="left:1479.20px;top:353.54px;font-size:12px;line-height:12px;color:#000000;white-space:pre;transform:scaleX(0.8062);transform-origin:0 0;">R$</div>
<div style="left:1519.70px;top:353.54px;font-size:12px;line-height:12px;color:#000000;white-space:pre;transform:scaleX(1.0385);transform-origin:0 0;">11.115,13</div>
<div style="left:1587.50px;top:353.54px;font-size:12px;line-height:12px;color:#000000;white-space:pre;transform:scaleX(0.9618);transform-origin:0 0;">5.56%</div>
<div style="left:1710.30px;top:353.54px;font-size:12px;line-height:12px;color:#000000;white-space:pre;transform:scaleX(0.8063);transform-origin:0 0;">R$</div>
<div style="left:1836.50px;top:353.54px;font-size:12px;line-height:12px;color:#000000;white-space:pre;transform:scaleX(0.9583);transform-origin:0 0;">2,30</div>
<div style="left:37px;top:343px;width:4px;height:1px;background:#222;"></div>
<div style="left:37px;top:361px;width:4px;height:1px;background:#222;"></div>
<div style="left:660px;top:385px;width:98px;height:2px;background:#217346;"></div>
<div style="left:660px;top:404px;width:92px;height:2px;background:#217346;"></div>
<div style="left:660px;top:385px;width:2px;height:21px;background:#217346;"></div>
<div style="left:756px;top:385px;width:2px;height:15px;background:#217346;"></div>
<div style="left:752px;top:400px;width:8px;height:8px;background:#ffffff;"></div>
<div style="left:754px;top:402px;width:5px;height:5px;background:#217346;"></div>
<svg style="left:0;top:0" width="1916" height="483"><rect x="22" y="10" width="12" height="11.8" fill="none" stroke="#fff" stroke-width="2"/><rect x="22" y="16" width="12" height="2" fill="#fff"/><rect x="22.5" y="17" width="1.8" height="5" fill="#fff"/><rect x="31.7" y="17" width="1.8" height="5" fill="#fff"/><rect x="26" y="20" width="2" height="2" fill="#fff"/><path d="M65 13.5 H74 A4 4 0 0 1 74 21.5 H71" fill="none" stroke="#fff" stroke-width="1.9"/><path d="M68.8 9.5 L64.8 13.5 L68.8 17.5" fill="none" stroke="#fff" stroke-width="1.9"/><path d="M86.5 13.8 h6 l-3 3z" fill="#fff"/><path d="M121.5 13.5 H112.5 A4 4 0 0 0 112.5 21.5 H115.5" fill="none" stroke="#6a9d7e" stroke-width="1.7"/><path d="M117.7 9.5 L121.7 13.5 L117.7 17.5" fill="none" stroke="#6a9d7e" stroke-width="1.7"/><path d="M131 14 h5.5 l-2.75 2.75z" fill="#6a9d7e"/><rect x="158.5" y="12.5" width="6" height="1.2" fill="#fff"/><path d="M158.5 15.5 h6 l-3 3.5z" fill="#fff"/><rect x="1747.5" y="11.5" width="12" height="9.5" fill="none" stroke="#fff" stroke-width="1"/><rect x="1747.5" y="11.5" width="12" height="1.5" fill="#fff"/><path d="M1753.5 20.5 v-5 M1751 17.5 l2.5 -2.5 2.5 2.5" fill="none" stroke="#fff" stroke-width="1.1"/><rect x="1795" y="17" width="10" height="1.6" fill="#fff"/><rect x="1841.5" y="11.5" width="9.5" height="9.5" fill="none" stroke="#fff" stroke-width="1.1"/><rect x="1841" y="11" width="10.5" height="2" fill="#fff"/><path d="M1887.5 11.5 l9 9 M1896.5 11.5 l-9 9" stroke="#fff" stroke-width="2"/><circle cx="1815.5" cy="43.3" r="4" fill="none" stroke="#fff" stroke-width="1.3"/><path d="M1808 53.5 a7.5 6.5 0 0 1 10 -5.5" fill="none" stroke="#fff" stroke-width="1.3"/><path d="M1817 51 h5.5 M1819.75 48.2 v5.6" stroke="#fff" stroke-width="1.3"/><path d="M790.5 46.5 a4.6 4.6 0 1 1 5.6 0 v3 h-5.6z" fill="none" stroke="#c9ddd0" stroke-width="1.1"/><path d="M791 51 h4.6" stroke="#c9ddd0" stroke-width="1.2"/><rect x="14" y="69" width="24" height="25" rx="2" fill="#ebc27b"/><path d="M19.5 73.5 h13.5 v-3.5 h-3.2 a3.1 3.1 0 0 0 -6.2 0 h-4.1z" fill="#646464"/><circle cx="26.5" cy="69" r="1" fill="#ebc27b"/><path d="M28.5 77.5 h8.7 l4.8 4.8 v12.8 h-13.5z" fill="#fff" stroke="#6c6c6c" stroke-width="1"/><path d="M37.2 77.5 v4.8 h4.8" fill="none" stroke="#6c6c6c" stroke-width="1"/><path d="M23.0 121.0 h5 l-2.5 3z" fill="#666"/><path d="M53.5 64 L61 73.5 M62 64 L54.5 73.5" stroke="#555" stroke-width="1.5"/><circle cx="53.7" cy="76" r="2.4" fill="none" stroke="#3f7bbf" stroke-width="1.3"/><circle cx="62" cy="76" r="2.4" fill="none" stroke="#3f7bbf" stroke-width="1.3"/><path d="M50.5 88.5 h4.5 l2.5 2.5 v7.5 h-7z" fill="#fff" stroke="#5a5a5a" stroke-width="1.1"/><path d="M56.5 91.5 h5 l3 3 v7 h-8z" fill="#fff" stroke="#5a5a5a" stroke-width="1.1"/><path d="M52 91.5 h2.5 M52 93.5 h3.5 M52 95.5 h3.5 M58 94.5 h2.5 M58 96.5 h5 M58 98.5 h5" stroke="#3f7bbf" stroke-width="1"/><path d="M114.8 95.0 h5 l-2.5 3z" fill="#666"/><path d="M62 115 L66 111.3" stroke="#5f5f5f" stroke-width="3.2" stroke-linecap="round"/><path d="M56.3 115.3 l3.7 -3.3 4.5 4.5 -3.3 3.7z" fill="#5f5f5f"/><path d="M50.3 117.8 L56 115.2 L61.2 120.2 L58 124.8z" fill="#e6b66c"/><path d="M300.0 79.5 h5 l-2.5 3z" fill="#666"/><path d="M342.7 79.5 h5 l-2.5 3z" fill="#666"/><path d="M360.2 86 L363.8 76.6 L367.4 86 M361.5 82.6 h4.6" fill="none" stroke="#505050" stroke-width="1.5"/><path d="M383 86 L386 78.3 L389 86 M384.1 83.2 h3.8" fill="none" stroke="#505050" stroke-width="1.4"/><path d="M367.2 76 l2.5 -3 2.5 3z" fill="#3f7bbf"/><path d="M389 73 h5.5 l-2.75 3z" fill="#3f7bbf"/><path d="M229.5 106.5 h5.5 M228 115.5 h5.5 M232.3 106.5 l-1.6 9" fill="none" stroke="#555" stroke-width="1.3"/><rect x="250" y="116" width="8" height="1.2" fill="#444"/><path d="M268.0 110.0 h5 l-2.5 3z" fill="#666"/><rect x="290" y="104" width="1" height="1" fill="#666"/><rect x="292" y="104" width="1" height="1" fill="#666"/><rect x="294" y="104" width="1" height="1" fill="#666"/><rect x="296" y="104" width="1" height="1" fill="#666"/><rect x="298" y="104" width="1" height="1" fill="#666"/><rect x="300" y="104" width="1" height="1" fill="#666"/><rect x="302" y="104" width="1" height="1" fill="#666"/><rect x="290" y="110" width="1" height="1" fill="#666"/><rect x="292" y="110" width="1" height="1" fill="#666"/><rect x="294" y="110" width="1" height="1" fill="#666"/><rect x="296" y="110" width="1" height="1" fill="#666"/><rect x="298" y="110" width="1" height="1" fill="#666"/><rect x="300" y="110" width="1" height="1" fill="#666"/><rect x="302" y="110" width="1" height="1" fill="#666"/><rect x="290" y="106" width="1" height="1" fill="#666"/><rect x="290" y="108" width="1" height="1" fill="#666"/><rect x="290" y="110" width="1" height="1" fill="#666"/><rect x="290" y="112" width="1" height="1" fill="#666"/><rect x="290" y="114" width="1" height="1" fill="#666"/><rect x="296" y="106" width="1" height="1" fill="#666"/><rect x="296" y="108" width="1" height="1" fill="#666"/><rect x="296" y="110" width="1" height="1" fill="#666"/><rect x="296" y="112" width="1" height="1" fill="#666"/><rect x="296" y="114" width="1" height="1" fill="#666"/><rect x="302" y="106" width="1" height="1" fill="#666"/><rect x="302" y="108" width="1" height="1" fill="#666"/><rect x="302" y="110" width="1" height="1" fill="#666"/><rect x="302" y="112" width="1" height="1" fill="#666"/><rect x="302" y="114" width="1" height="1" fill="#666"/><rect x="290" y="116" width="13" height="1.3" fill="#555"/><path d="M311.0 110.0 h5 l-2.5 3z" fill="#666"/><path d="M334.5 110.3 l5.3 -5.3 5.3 5.3 -5.3 5.3z" fill="#fff" stroke="#555" stroke-width="1"/><path d="M337.5 107.5 v-4 h3.5 l-0.5 0.5 M340.5 103.5 v4.5" fill="none" stroke="#555" stroke-width="1"/><path d="M344.6 106.8 q3.8 1 3.4 4.6 q-0.2 1.8 -1.6 3 q0.2 -3.2 -1.8 -5.2z" fill="#3f7bbf"/><path d="M354.0 110.0 h5 l-2.5 3z" fill="#666"/><path d="M370.5 114.8 L374.3 105.8 L378.1 114.8 M371.9 111.5 h4.8" fill="none" stroke="#505050" stroke-width="1.6"/><path d="M388.0 110.0 h5 l-2.5 3z" fill="#666"/><path d="M183.5 145 v-5.5 h5.5" fill="none" stroke="#888" stroke-width="1"/><path d="M185.5 141.5 l4 4 M190 142.5 v3.5 h-3.5" fill="none" stroke="#777" stroke-width="1"/><path d="M390.5 145 v-5.5 h5.5" fill="none" stroke="#888" stroke-width="1"/><path d="M392.5 141.5 l4 4 M397 142.5 v3.5 h-3.5" fill="none" stroke="#777" stroke-width="1"/><path d="M729.5 145 v-5.5 h5.5" fill="none" stroke="#888" stroke-width="1"/><path d="M731.5 141.5 l4 4 M736 142.5 v3.5 h-3.5" fill="none" stroke="#777" stroke-width="1"/><path d="M869.5 145 v-5.5 h5.5" fill="none" stroke="#888" stroke-width="1"/><path d="M871.5 141.5 l4 4 M876 142.5 v3.5 h-3.5" fill="none" stroke="#777" stroke-width="1"/><rect x="410" y="72" width="14" height="1" fill="#555"/><rect x="410" y="75" width="14" height="1" fill="#555"/><rect x="410" y="78" width="14" height="1" fill="#555"/><rect x="432" y="76" width="14" height="1" fill="#555"/><rect x="432" y="79" width="14" height="1" fill="#555"/><rect x="432" y="82" width="14" height="1" fill="#555"/><rect x="454" y="81" width="14" height="1" fill="#555"/><rect x="454" y="84" width="14" height="1" fill="#555"/><rect x="454" y="87" width="14" height="1" fill="#555"/><text x="0" y="0" transform="translate(486.3 85.2) rotate(-45)" font-family="Liberation Sans" font-size="11.5" fill="#4a4a4a" stroke="#4a4a4a" stroke-width="0.35">ab</text><path d="M490.5 86.5 l9.2 -9.2" stroke="#4a4a4a" stroke-width="1.2"/><path d="M500.2 76.3 l-4.2 0.8 3.4 3.4z" fill="#4a4a4a"/><path d="M504.0 79.0 h5 l-2.5 3z" fill="#666"/><rect x="410" y="106" width="14" height="1" fill="#555"/><rect x="410" y="109" width="10" height="1" fill="#555"/><rect x="410" y="112" width="14" height="1" fill="#555"/><rect x="410" y="115" width="10" height="1" fill="#555"/><rect x="432" y="106" width="14" height="1" fill="#555"/><rect x="434" y="109" width="10" height="1" fill="#555"/><rect x="432" y="112" width="14" height="1" fill="#555"/><rect x="434" y="115" width="10" height="1" fill="#555"/><rect x="454" y="106" width="14" height="1" fill="#555"/><rect x="458" y="109" width="10" height="1" fill="#555"/><rect x="454" y="112" width="14" height="1" fill="#555"/><rect x="458" y="115" width="10" height="1" fill="#555"/><rect x="484" y="104" width="16" height="1" fill="#555"/><rect x="506" y="104" width="16" height="1" fill="#555"/><rect x="484" y="116" width="16" height="1" fill="#555"/><rect x="506" y="116" width="16" height="1" fill="#555"/><rect x="492" y="107" width="8" height="1" fill="#555"/><rect x="514" y="107" width="8" height="1" fill="#555"/><rect x="492" y="110" width="8" height="1" fill="#555"/><rect x="514" y="110" width="8" height="1" fill="#555"/><rect x="492" y="113" width="8" height="1" fill="#555"/><rect x="514" y="113" width="8" height="1" fill="#555"/><path d="M485 110.5 h6 M487.5 108 l-2.5 2.5 2.5 2.5" fill="none" stroke="#3f7bbf" stroke-width="1.5"/><path d="M506 110.5 h6 M509.5 108 l2.5 2.5 -2.5 2.5" fill="none" stroke="#3f7bbf" stroke-width="1.5"/><rect x="537.5" y="72.5" width="9" height="4" fill="#fff" stroke="#666" stroke-width="1"/><rect x="537.5" y="79.5" width="9" height="7" fill="#fff" stroke="#666" stroke-width="1"/><path d="M539.5 74.5 h11.5 M539.5 81.5 h5.5 M539.5 83.5 h5.5" stroke="#3f7bbf" stroke-width="1"/><path d="M551.5 77 a3 3 0 0 1 -3 3.8 h-1.5" fill="none" stroke="#3f7bbf" stroke-width="1.2"/><path d="M549 78.5 l-2.8 2.3 2.8 2.3" fill="none" stroke="#3f7bbf" stroke-width="1.2"/><rect x="537.5" y="103.5" width="14" height="14" fill="#fff" stroke="#666" stroke-width="1"/><path d="M537.5 106.5 h14 M537.5 114.5 h14 M544.5 103.5 v3 M544.5 114.5 v3" stroke="#666" stroke-width="1"/><path d="M539.5 110.5 h10 M541.5 108.5 l-2 2 2 2 M547.5 108.5 l2 2 -2 2" fill="none" stroke="#3f7bbf" stroke-width="1"/><path d="M674.5 110.0 h5 l-2.5 3z" fill="#666"/><path d="M865.7 79.5 h5 l-2.5 3z" fill="#666"/><rect x="748.8" y="103.8" width="14.7" height="7.7" fill="#fff" stroke="#3f7bbf" stroke-width="1.6"/><path d="M748 103 h3 l-3 3z M764.3 103 h-3 l3 3z" fill="#3f7bbf"/><circle cx="755.3" cy="107.6" r="2.1" fill="#3f7bbf"/><path d="M757 109.5 h7 v1.6 h-7z M757 112 h7 v1.5 h-7z" fill="#ebc27b"/><path d="M752.5 114 h7 v1.6 h-7z M752.5 116.5 h7 v1.6 h-7z" fill="#ebc27b"/><ellipse cx="760.5" cy="109.8" rx="3.6" ry="1.2" fill="#ebc27b"/><ellipse cx="756" cy="114.3" rx="3.6" ry="1.2" fill="#ebc27b"/><ellipse cx="756" cy="118.4" rx="3.6" ry="1" fill="#ebc27b"/><ellipse cx="760.5" cy="113.7" rx="3.6" ry="1" fill="#ebc27b"/><path d="M770.0 110.0 h5 l-2.5 3z" fill="#666"/><path d="M835.5 107.5 h6.5 M838.3 105 l-2.6 2.5 2.6 2.5" fill="none" stroke="#3f7bbf" stroke-width="1.5"/><path d="M857.3 114.5 h6.5 M861.2 112 l2.6 2.5 -2.6 2.5" fill="none" stroke="#3f7bbf" stroke-width="1.5"/><rect x="909.5" y="66.5" width="27" height="24" fill="#fff" stroke="#6d6d6d" stroke-width="1.2"/><path d="M916.5 66.5 v24 M923 66.5 v24 M929.5 66.5 v24 M909.5 72.5 h27 M909.5 78.5 h27 M909.5 84.5 h27" stroke="#b9b9b9" stroke-width="1"/><rect x="917" y="67" width="6" height="5" fill="#e06a45"/><rect x="917" y="73" width="11" height="5" fill="#4a83c4"/><rect x="917" y="79" width="9" height="5" fill="#e06a45"/><rect x="917" y="85" width="4" height="5" fill="#4a83c4"/><rect x="923.5" y="83.5" width="15" height="12" fill="#fff" stroke="#6d6d6d" stroke-width="1.2"/><path d="M927 87.5 h8 M927 90.5 h8 M929 93.5 l4 -8" stroke="#444" stroke-width="1.1"/><path d="M954.5 122.0 h5 l-2.5 3z" fill="#666"/><rect x="992.5" y="68.5" width="24" height="20" fill="#fff" stroke="#6d6d6d" stroke-width="1.2"/><rect x="999" y="74" width="17" height="14" fill="#c5d9f1"/><path d="M998.5 68.5 v20 M1004.5 68.5 v20 M1010.5 68.5 v20 M992.5 73.5 h24 M992.5 78.5 h24 M992.5 83.5 h24" stroke="#b5b5b5" stroke-width="1"/><path d="M1021.5 73.5 v5 l-8 8 -3 -3z" fill="#808080"/><path d="M1009.5 85 a3.6 3.6 0 0 1 3 5 q-3 5 -14 6 q5 -4 6 -8 a3.6 3.6 0 0 1 5 -3z" fill="#3f7bbf"/><path d="M1020.5 122.0 h5 l-2.5 3z" fill="#666"/><path d="M1374.5 79 h5 l-2.5 -2.5z" fill="#b0b0b0"/><path d="M1374.7 94.0 h5 l-2.5 3z" fill="#555"/><rect x="1374.8" y="112" width="5" height="1" fill="#555"/><path d="M1374.7 115 h5 l-2.5 2.8z" fill="#555"/><rect x="1405.5" y="66.5" width="15" height="5.5" fill="#fff" stroke="#6d6d6d" stroke-width="1.2"/><path d="M1413.0 66.5 v5.5" stroke="#6d6d6d" stroke-width="1"/><rect x="1416.5" y="74.5" width="15" height="5.5" fill="#c5d9f1" stroke="#6d6d6d" stroke-width="1.2"/><path d="M1424.0 74.5 v5.5" stroke="#6d6d6d" stroke-width="1"/><rect x="1405.5" y="82.5" width="15" height="10.5" fill="#fff" stroke="#6d6d6d" stroke-width="1.2"/><path d="M1413.0 82.5 v10.5" stroke="#6d6d6d" stroke-width="1"/><path d="M1405.5 87.75 h15" stroke="#6d6d6d" stroke-width="1"/><path d="M1406 77 h7 M1408.5 74.5 l-2.5 2.5 2.5 2.5" fill="none" stroke="#3f7bbf" stroke-width="1.8"/><path d="M1415.1 121.0 h5 l-2.5 3z" fill="#666"/><rect x="1446.5" y="66.5" width="15" height="5.5" fill="#fff" stroke="#6d6d6d" stroke-width="1.2"/><path d="M1454.0 66.5 v5.5" stroke="#6d6d6d" stroke-width="1"/><rect x="1452.5" y="74.5" width="12" height="5.5" fill="#c5d9f1" stroke="#6d6d6d" stroke-width="1.2"/><path d="M1458.5 74.5 v5.5" stroke="#6d6d6d" stroke-width="1"/><rect x="1446.5" y="83.5" width="15" height="10.5" fill="#fff" stroke="#6d6d6d" stroke-width="1.2"/><path d="M1454.0 83.5 v10.5" stroke="#6d6d6d" stroke-width="1"/><path d="M1446.5 88.75 h15" stroke="#6d6d6d" stroke-width="1"/><path d="M1461.5 72 q5 5 13.5 12.5 M1475 72 q-7 5 -14 12.5" fill="none" stroke="#d9542c" stroke-width="1.8"/><path d="M1457.0 121.0 h5 l-2.5 3z" fill="#666"/><path d="M1493.5 65 v5 M1515.5 65 v5 M1494.5 67.5 h20 M1497 65.5 l-2 2 2 2 M1513 65.5 l2 2 -2 2" fill="none" stroke="#3f7bbf" stroke-width="1"/><rect x="1493.5" y="71.5" width="27" height="20" fill="#fff" stroke="#6d6d6d" stroke-width="1.2"/><path d="M1500.5 71.5 v20 M1508.5 71.5 v20 M1515.5 71.5 v20 M1493.5 76.5 h27 M1493.5 86.5 h27" stroke="#a8a8a8" stroke-width="1"/><rect x="1501" y="77" width="7" height="9" fill="#4a83c4"/><path d="M1494 91.5 v3.5 h7.5 l2 -3.5 M1503 91.5 v3.5 h8 l2.5 -3.5" fill="none" stroke="#6d6d6d" stroke-width="1"/><path d="M1505.0 121.0 h5 l-2.5 3z" fill="#666"/><path d="M1560.5 66 h-13 l7 6.5 -7 6.5 h13.5" fill="none" stroke="#444" stroke-width="2.2"/><path d="M1631.0 71.3 h5 l-2.5 3z" fill="#666"/><rect x="1547.5" y="87.5" width="13" height="15" fill="#fff" stroke="#777" stroke-width="1"/><rect x="1547" y="87" width="14" height="3" fill="#777"/><path d="M1554 92 v8 M1551 97 l3 3 3 -3" fill="none" stroke="#3f7bbf" stroke-width="1.8"/><path d="M1621.1 94.3 h5 l-2.5 3z" fill="#666"/><path d="M1548 120 l7 -8 a1.5 1.5 0 0 1 2.2 0 l2.6 2.6 a1.5 1.5 0 0 1 0 2.2 l-6.8 6.7 h-2.2z" fill="#e8899a"/><path d="M1553 123.5 h8" stroke="#777" stroke-width="1"/><path d="M1605.0 118.0 h5 l-2.5 3z" fill="#666"/><path d="M1667 74 h17 l-6.5 7 v8 h-3.5 v-8z" fill="#7a7a7a"/><path d="M1669.5 75.5 l5 5 v7.5" fill="none" stroke="#fff" stroke-width="0.8"/><path d="M1689.0 122.0 h5 l-2.5 3z" fill="#666"/><circle cx="1735" cy="76" r="8.7" fill="#fff" stroke="#3d78bf" stroke-width="2.2"/><path d="M1729 82.5 l-8.5 8.5" stroke="#3d78bf" stroke-width="3.2" stroke-linecap="round"/><path d="M1758.2 122.0 h5 l-2.5 3z" fill="#666"/><path d="M1807 68.5 h9.5 l5 5 v7 M1813 91.5 h-6 a3.5 3.5 0 0 1 -3.5 -3.5 v-16 a3.5 3.5 0 0 1 3.5 -3.5" fill="none" stroke="#3b7ddd" stroke-width="1.5"/><path d="M1811 74 q1 6 -4 11 M1811 79 q4 2 8 3 M1807 85 q5 -3 12 -3" fill="none" stroke="#3b7ddd" stroke-width="0.7"/><rect x="1813" y="89" width="9" height="5" rx="2.5" transform="rotate(-45 1817.5 91.5)" fill="#f1f1f1" stroke="#3b7ddd" stroke-width="1.4"/><rect x="1819.5" y="83" width="9" height="5" rx="2.5" transform="rotate(-45 1824 85.5)" fill="none" stroke="#3b7ddd" stroke-width="1.4"/><path d="M1896 145 l4.5 -4.5 4.5 4.5" fill="none" stroke="#666" stroke-width="1.5"/><path d="M94 171 h7 l-3.5 3.8z" fill="#666"/><rect x="122" y="169.5" width="2" height="2" fill="#9a9a9a"/><rect x="122" y="173.5" width="2" height="2" fill="#9a9a9a"/><rect x="122" y="177.5" width="2" height="2" fill="#9a9a9a"/><path d="M152 170 l10 9 M162 170 l-10 9" stroke="#b4b4b4" stroke-width="1.3"/><path d="M187 174.5 l4 4 8.5 -9" fill="none" stroke="#c4c4c4" stroke-width="2"/><path d="M1898 174.5 l3.5 -3.5 3.5 3.5" fill="none" stroke="#666" stroke-width="1.6"/><path d="M14.5 250 h8.5 v-8.5z" fill="#b4b4b4"/></svg>
<div style="left:1px;top:432px;width:1914px;height:29px;background:#e6e6e6;"></div>
<div style="left:1px;top:432px;width:1893px;height:1px;background:#9b9b9b;"></div>
<div style="left:1px;top:461px;width:1914px;height:21px;background:#f1f1f1;"></div>
<div style="left:1px;top:460px;width:1914px;height:1px;background:#c6c6c6;"></div>
<div style="left:101px;top:432px;width:78px;height:23px;background:#ffffff;"></div>
<div style="left:101px;top:432px;width:1px;height:25px;background:#b4b4b4;"></div>
<div style="left:178px;top:432px;width:1px;height:25px;background:#b4b4b4;"></div>
<div style="left:101px;top:455px;width:78px;height:2px;background:#217346;"></div>
<div style="left:112.90px;top:439.22px;font-size:12.5px;line-height:12.5px;color:#217346;white-space:pre;font-weight:bold;transform:scaleX(1.0132);transform-origin:0 0;">Sintético</div>
<div style="left:1166px;top:439px;width:15px;height:15px;background:#ffffff;box-sizing:border-box;border:1px solid #a6a6a6;"></div>
<div style="left:1180px;top:439px;width:660px;height:15px;background:#ffffff;box-sizing:border-box;border:1px solid #a6a6a6;"></div>
<div style="left:1840px;top:440px;width:39px;height:13px;background:#dadada;"></div>
<div style="left:1879px;top:439px;width:15px;height:15px;background:#ffffff;box-sizing:border-box;border:1px solid #a6a6a6;"></div>
<div style="left:1897px;top:239px;width:15px;height:193px;background:#dadada;"></div>
<div style="left:1897px;top:239px;width:15px;height:15px;background:#ffffff;box-sizing:border-box;border:1px solid #a6a6a6;"></div>
<div style="left:1897px;top:254px;width:15px;height:73px;background:#ffffff;box-sizing:border-box;border:1px solid #a6a6a6;"></div>
<div style="left:1897px;top:418px;width:15px;height:14px;background:#ffffff;box-sizing:border-box;border:1px solid #c6c6c6;"></div>
<div style="left:9.20px;top:465.99px;font-size:11px;line-height:11px;color:#444;white-space:pre;transform:scaleX(1.0344);transform-origin:0 0;">Pronto</div>
<div style="left:1868.00px;top:465.99px;font-size:11px;line-height:11px;color:#444;white-space:pre;transform:scaleX(0.9545);transform-origin:0 0;">91%</div>
<div style="left:1612px;top:461px;width:38px;height:21px;background:#c6c6c6;"></div>
<div style="left:1731px;top:470px;width:6px;height:2px;background:#555;"></div>
<div style="left:1741px;top:470px;width:100px;height:1px;background:#9a9a9a;"></div>
<div style="left:1785px;top:465px;width:4px;height:11px;background:#666;"></div>
<div style="left:1791px;top:467px;width:1px;height:7px;background:#9a9a9a;"></div>
<div style="left:1845px;top:470px;width:8px;height:2px;background:#444;"></div>
<div style="left:1848px;top:467px;width:2px;height:8px;background:#444;"></div>
<svg style="left:0;top:0" width="1916" height="483"><path d="M32.5 442.5 v6.5 l-4.5 -3.25z" fill="#c2c2c2"/><path d="M57 442.5 v6.5 l4.5 -3.25z" fill="#c2c2c2"/><circle cx="219.8" cy="445.8" r="7.3" fill="none" stroke="#666" stroke-width="1.1"/><path d="M215.5 445.8 h8.6 M219.8 441.5 v8.6" stroke="#555" stroke-width="1.8"/><rect x="1149" y="441.0" width="2" height="2" fill="#a0a0a0"/><rect x="1149" y="445.0" width="2" height="2" fill="#a0a0a0"/><rect x="1149" y="449.0" width="2" height="2" fill="#a0a0a0"/><path d="M1175 443 v7 l-4.2 -3.5z" fill="#666"/><path d="M1885 443 v7 l4.2 -3.5z" fill="#666"/><path d="M1900.5 249 h8 l-4 -4z" fill="#666"/><path d="M1900.5 423 h8 l-4 4z" fill="#666"/><path d="M1624.5 464.5 h12 v12 h-12z M1628.5 464.5 v12 M1632.5 464.5 v12 M1624.5 468.5 h12 M1624.5 472.5 h12" fill="none" stroke="#666" stroke-width="1.2"/><rect x="1662.5" y="464.5" width="13" height="12" fill="none" stroke="#666" stroke-width="1.2"/><rect x="1665.5" y="466.5" width="7" height="8" fill="none" stroke="#666" stroke-width="1"/><path d="M1667 469 h4 M1667 471 h4 M1667 473 h4" stroke="#666" stroke-width="0.8"/><path d="M1700.5 464.5 h13 v12 h-13z M1700.5 471.5 h5 v-7 M1709.5 464.5 v4" fill="none" stroke="#666" stroke-width="1.2"/></svg>
</body></html>
